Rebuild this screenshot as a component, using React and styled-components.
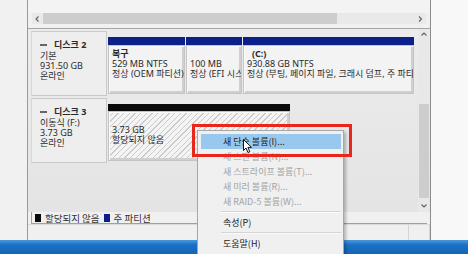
import React from 'react';
import styled, { createGlobalStyle } from 'styled-components';

const Global = createGlobalStyle`
  html, body { margin: 0; padding: 0; background: #f3f3f3; }
  body { font-family: "Noto Sans", "Noto Sans CJK KR", sans-serif; }
`;

const Screen = styled.div`
  width: 468px;
  height: 254px;
  display: flex;
  flex-direction: column;
  overflow: hidden;
  position: relative;
  font-size: 9px;
  line-height: 10px;
  color: #2a2a2a;
`;

const Desktop = styled.div`
  height: 240px;
  display: flex;
`;

const SidePane = styled.div`
  width: 27px;
  background: #f1f1f1;
  border-right: 1px solid #9a9a9a;
`;

const Win = styled.div`
  width: 402px;
  display: flex;
  flex-direction: column;
  background: #f0f0f0;
  border-right: 1px solid #8c8c8c;
`;

const RightPane = styled.div`
  flex: 1;
  background: #f8f8f8;
`;

const Taskbar = styled.div`
  height: 14px;
  background: linear-gradient(#4a98de, #1c70c4 35%, #1565b8);
`;

const TopArea = styled.div`
  height: 13px;
  background: #f3f3f3;
`;

const HScroll = styled.div`
  height: 11px;
  margin: 0 4px;
  display: flex;
  align-items: center;
  background: #e9e9e9;
`;

const ArrowBox = styled.div`
  width: 11px;
  height: 11px;
  display: flex;
  align-items: center;
  justify-content: center;
  flex: none;
`;

const HTrack = styled.div`
  flex: 1;
  height: 11px;
  display: flex;
`;

const HThumb = styled.div`
  width: 294px;
  background: #cdcdcd;
`;

const Panel = styled.div`
  margin-top: 4px;
  height: 183px;
  border-top: 1px solid #a6a6a6;
  display: flex;
  padding-left: 3px;
  background: linear-gradient(#ececec, #e4e4e4);
`;

const DiskList = styled.div`
  width: 384px;
  display: flex;
  flex-direction: column;
  gap: 2px;
  padding-top: 2px;
`;

const DiskRow = styled.div`
  display: flex;
  height: 65px;
`;

const DiskLabel = styled.div`
  width: 76px;
  padding: 8px 0 0 8px;
  box-sizing: border-box;
  background: #eeeeee;
  border: 1px solid #c9c9c9;
  border-left-color: #d8d8d8;
`;

const DiskName = styled.div`
  font-weight: 700;
  display: flex;
  align-items: center;
  gap: 7px;
  margin-bottom: 1px;
`;

const DiskIcon = styled.span`
  display: inline-block;
  width: 7px;
  height: 2px;
  background: #666;
`;

const Parts = styled.div`
  display: flex;
  gap: 1px;
  padding: 6px 0 2px 1px;
  flex: 1;
`;

const Part = styled.div`
  width: ${p => p.w}px;
  display: flex;
  flex-direction: column;
`;

const PartBar = styled.div`
  height: ${p => p.h || 8}px;
  background: ${p => p.c};
`;

const PartBody = styled.div`
  flex: 1;
  background: ${p => p.hatch
    ? 'repeating-linear-gradient(135deg, #f4f4f4 0 3px, #cbcbcb 3px 4px)'
    : '#f3f3f3'};
  border: 1px solid #c4c4c4;
  box-shadow: inset 1px 1px 0 #fafafa, inset -2px -2px 0 #cfcfcf;
  padding: 3px 0 0 3px;
  white-space: nowrap;
  overflow: hidden;
`;

const PartName = styled.div`
  font-weight: 700;
  height: 10px;
  padding-left: ${p => p.indent || 0}px;
`;

const VScroll = styled.div`
  width: 11px;
  margin-left: 3px;
  display: flex;
  flex-direction: column;
  align-items: center;
  background: #e8e8e8;
`;

const VThumb = styled.div`
  width: 10px;
  height: 94px;
  margin-top: 64px;
  margin-bottom: 2px;
  background: #cdcdcd;
`;

const Legend = styled.div`
  height: 11px;
  margin: 0 3px;
  border-left: 1px solid #a0a0a0;
  border-bottom: 1px solid #a0a0a0;
  display: flex;
  align-items: center;
  gap: 4px;
  padding-left: 3px;
  background: #f0f0f0;
  color: #333;
  font-family: "Noto Sans CJK KR", sans-serif;
  font-size: 9.5px;
`;

const Swatch = styled.span`
  width: 6px;
  height: 8px;
  background: ${p => p.c};
`;

const StatusBar = styled.div`
  flex: 1;
  display: flex;
  border-top: 1px solid #dadada;
  background: #f0f0f0;
`;

const StatusPane = styled.div`
  flex: ${p => p.grow ? 1 : 'none'};
  width: ${p => p.w || 'auto'};
  border-right: 1px solid #d4d4d4;
`;

const Menu = styled.div`
  position: absolute;
  left: 197px;
  top: 130px;
  width: 147px;
  padding: 3px 2px 3px 3px;
  box-sizing: border-box;
  background: #f0f0f0;
  border: 1px solid #a8a8a8;
  box-shadow: 2px 2px 3px rgba(0, 0, 0, 0.25);
  font-family: "Noto Sans CJK KR", sans-serif;
  font-size: 9px;
`;

const MenuItem = styled.div`
  height: 15px;
  line-height: 15px;
  padding-left: 22px;
  color: ${p => p.off ? '#a3a3a3' : '#222'};
  background: ${p => p.on ? '#99c8ee' : 'transparent'};
`;

const MenuSep = styled.div`
  height: 1px;
  margin: 2px 0 2px 20px;
  background: #d4d4d4;
  border-bottom: 1px solid #fbfbfb;
`;

const Highlight = styled.div`
  position: absolute;
  left: 192px;
  top: 124px;
  width: 160px;
  height: 33px;
  box-sizing: border-box;
  border: 3px solid #e8261c;
`;

const Cursor = styled.svg`
  position: absolute;
  left: 243px;
  top: 139px;
`;

const Chevron = ({ dir }) => {
  const d = {
    left: 'M4.5 1.5 L2 4 L4.5 6.5',
    right: 'M2 1.5 L4.5 4 L2 6.5',
    up: 'M1.5 4.5 L4 2 L6.5 4.5',
    down: 'M1.5 2.5 L4 5 L6.5 2.5',
  }[dir];
  const horiz = dir === 'left' || dir === 'right';
  return (
    <svg width={horiz ? 7 : 8} height={horiz ? 8 : 7} viewBox={horiz ? '0 0 7 8' : '0 0 8 7'}>
      <path d={d} fill="none" stroke="#606060" strokeWidth="1.1" />
    </svg>
  );
};

export default function App() {
  return (
    <Screen>
      <Global />
      <Desktop>
        <SidePane />
        <Win>
          <TopArea />
          <HScroll>
            <ArrowBox><Chevron dir="left" /></ArrowBox>
            <HTrack><HThumb /></HTrack>
            <ArrowBox><Chevron dir="right" /></ArrowBox>
          </HScroll>
          <Panel>
            <DiskList>
              <DiskRow>
                <DiskLabel>
                  <DiskName><DiskIcon />디스크 2</DiskName>
                  <div>기본</div>
                  <div>931.50 GB</div>
                  <div>온라인</div>
                </DiskLabel>
                <Parts>
                  <Part w={77}>
                    <PartBar c="#0c2089" />
                    <PartBody>
                      <PartName>복구</PartName>
                      <div>529 MB NTFS</div>
                      <div>정상 (OEM 파티션)</div>
                    </PartBody>
                  </Part>
                  <Part w={56}>
                    <PartBar c="#0c2089" />
                    <PartBody>
                      <PartName />
                      <div>100 MB</div>
                      <div>정상 (EFI 시스</div>
                    </PartBody>
                  </Part>
                  <Part w={171}>
                    <PartBar c="#0c2089" />
                    <PartBody>
                      <PartName indent={5}>(C:)</PartName>
                      <div>930.88 GB NTFS</div>
                      <div>정상 (부팅, 페이지 파일, 크래시 덤프, 주 파티</div>
                    </PartBody>
                  </Part>
                </Parts>
              </DiskRow>
              <DiskRow>
                <DiskLabel>
                  <DiskName><DiskIcon />디스크 3</DiskName>
                  <div>이동식 (F:)</div>
                  <div>3.73 GB</div>
                  <div>온라인</div>
                </DiskLabel>
                <Parts>
                  <Part w={182}>
                    <PartBar c="#0a0a0a" h={7} />
                    <PartBody hatch>
                      <PartName />
                      <div>3.73 GB</div>
                      <div>할당되지 않음</div>
                    </PartBody>
                  </Part>
                </Parts>
              </DiskRow>
            </DiskList>
            <VScroll>
              <ArrowBox><Chevron dir="up" /></ArrowBox>
              <VThumb />
              <ArrowBox><Chevron dir="down" /></ArrowBox>
            </VScroll>
          </Panel>
          <Legend>
            <Swatch c="#0a0a0a" />
            <span>할당되지 않음</span>
            <Swatch c="#0c2089" />
            <span>주 파티션</span>
          </Legend>
          <StatusBar>
            <StatusPane grow />
            <StatusPane w="20px" />
          </StatusBar>
        </Win>
        <RightPane />
      </Desktop>
      <Taskbar />
      <Menu>
        <MenuItem on>새 단순 볼륨(I)...</MenuItem>
        <MenuItem off>새 스팬 볼륨(N)...</MenuItem>
        <MenuItem off>새 스트라이프 볼륨(T)...</MenuItem>
        <MenuItem off>새 미러 볼륨(R)...</MenuItem>
        <MenuItem off>새 RAID-5 볼륨(W)...</MenuItem>
        <MenuSep />
        <MenuItem>속성(P)</MenuItem>
        <MenuSep />
        <MenuItem>도움말(H)</MenuItem>
      </Menu>
      <Highlight />
      <Cursor width="10" height="15" viewBox="0 0 10 15">
        <path d="M0.5 0.5 L0.5 11.5 L3 9 L5 13.5 L6.8 12.7 L4.9 8.4 L8.5 8.4 Z" fill="#fff" stroke="#111" strokeWidth="1" />
      </Cursor>
    </Screen>
  );
}
